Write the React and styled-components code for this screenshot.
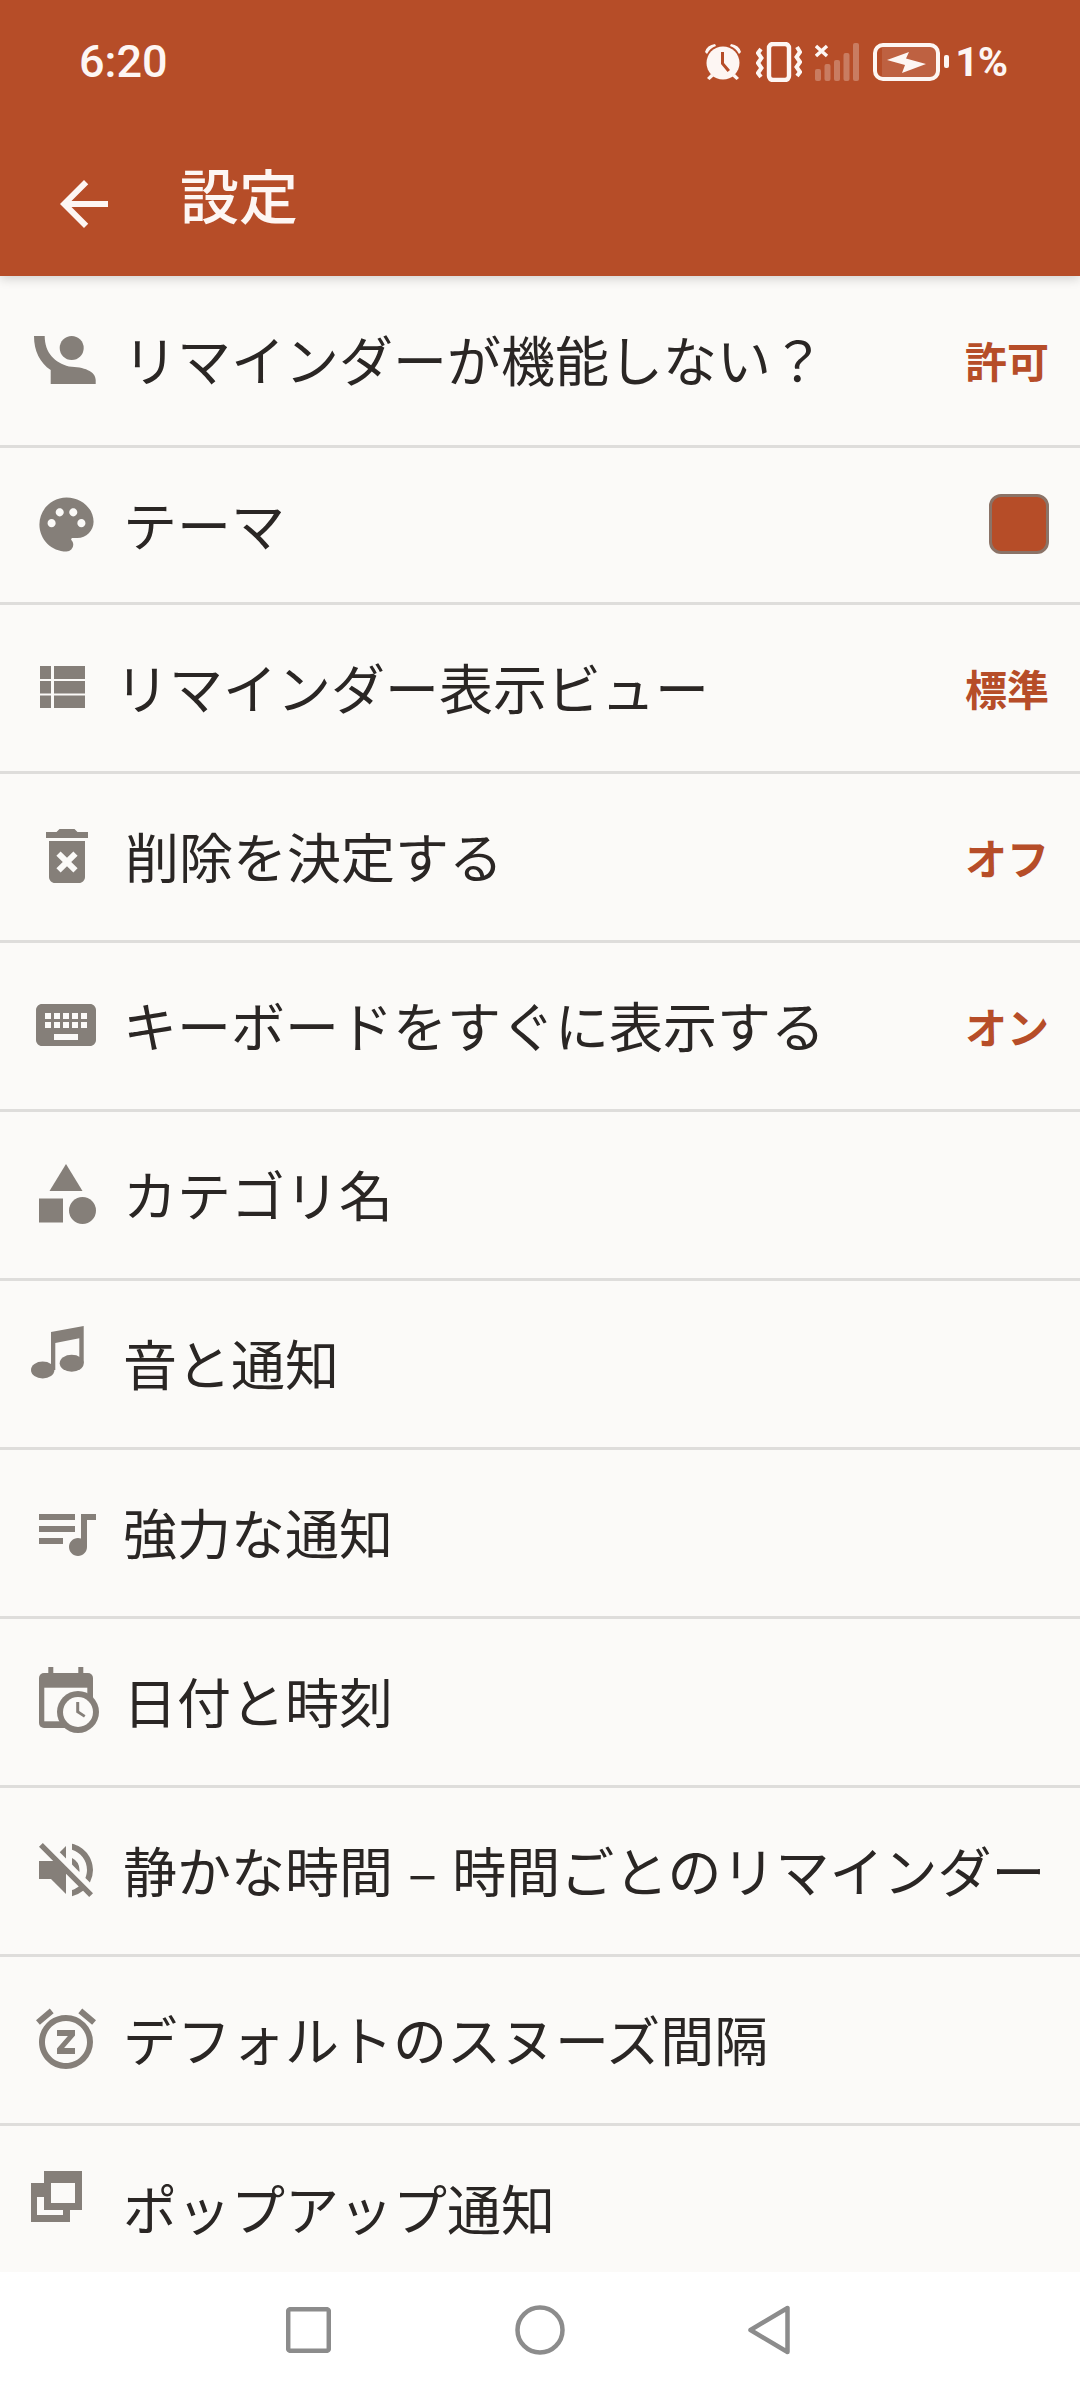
import React from "react";
import styled, { createGlobalStyle } from "styled-components";
import {
  MdArrowBack,
  MdCategory,
  MdDeleteForever,
  MdKeyboard,
  MdPalette,
  MdQueueMusic,
  MdSnooze,
  MdVolumeOff
} from "react-icons/md";

const brand = "#b64d28";
const paper = "#fbfaf8";
const iconGrey = "#857f79";
const cjk = '"Noto Sans CJK JP", "Noto Sans", sans-serif';

const GlobalStyle = createGlobalStyle`
  html, body {
    margin: 0;
    padding: 0;
    background: #fff;
  }
`;

const Screen = styled.div`
  width: 1080px;
  height: 2388px;
  display: flex;
  flex-direction: column;
  overflow: hidden;
  font-family: ${cjk};
`;

const Header = styled.header`
  flex: none;
  height: 276px;
  background: ${brand};
  color: #fdf6f3;
  box-shadow: 0 3px 10px rgba(0, 0, 0, 0.16);
  position: relative;
  z-index: 1;
`;

const StatusBar = styled.div`
  height: 108px;
  box-sizing: border-box;
  padding: 38px 73px 0 79px;
  display: flex;
  align-items: flex-start;
`;

const Clock = styled.span`
  font: 500 45px/48px Roboto, sans-serif;
  flex: 1;
`;

const StatusIcons = styled.div`
  display: flex;
  align-items: center;
  height: 48px;
`;

const StatusGlyph = styled.svg`
  display: block;
  flex: none;
  margin-left: ${p => p.$gap || 0}px;
  fill: currentColor;
`;

const Percent = styled.span`
  font: 700 41px/48px Roboto, sans-serif;
  letter-spacing: -1px;
  margin-left: 6px;
`;

const Toolbar = styled.div`
  height: 168px;
  display: flex;
  align-items: center;
`;

const BackIcon = styled(MdArrowBack)`
  flex: none;
  margin: 24px 0 0 48px;
`;

const Title = styled.h1`
  margin: 2px 0 0 60px;
  font-size: 59px;
  font-weight: 500;
  line-height: 1;
`;

const List = styled.main`
  flex: 1;
  min-height: 0;
  overflow: hidden;
  background: ${paper};
`;

const Row = styled.div`
  height: ${p => p.$height || 169}px;
  box-sizing: border-box;
  display: flex;
  align-items: center;
  padding: 0 31px 2px 0;
  border-bottom: 3px solid #dedddb;
`;

const IconSlot = styled.div`
  flex: none;
  width: 72px;
  height: 72px;
  display: flex;
  align-items: center;
  justify-content: center;
  color: ${iconGrey};
  margin-left: ${p => p.$left}px;
  margin-top: ${p => p.$top || 0}px;
  svg {
    display: block;
    flex: none;
    fill: currentColor;
  }
`;

const Label = styled.span`
  flex: 1;
  min-width: 0;
  white-space: nowrap;
  font-size: 54px;
  word-spacing: 3px;
  line-height: 1.2;
  color: #2a2624;
  margin-left: ${p => p.$indent}px;
`;

const Value = styled.span`
  flex: none;
  font-size: 42px;
  font-weight: 700;
  color: ${brand};
`;

const Swatch = styled.span`
  flex: none;
  width: 60px;
  height: 60px;
  box-sizing: border-box;
  border: 3px solid #8b7367;
  border-radius: 12px;
  background: ${brand};
`;

const NavBar = styled.nav`
  flex: none;
  height: 116px;
  background: #fff;
  display: flex;
  align-items: center;
  padding-left: 286px;
  svg {
    display: block;
    fill: none;
    stroke: #8c8c8c;
    stroke-width: 4.5;
  }
`;

const NavGap = styled.span`
  flex: none;
  width: ${p => p.$width}px;
`;

const AlarmGlyph = () => (
  <StatusGlyph $gap={0} width="38" height="38" viewBox="0 0 38 38">
    <path d="M1 9 Q3 2 11 1 L12 3 Q6 5 3 11Z M37 9 Q35 2 27 1 L26 3 Q32 5 35 11Z" />
    <path d="M7 31 L3 35 L5.5 37 L10 33Z M31 31 L35 35 L32.5 37 L28 33Z" />
    <circle cx="19" cy="20" r="16.5" />
    <path d="M17 9 h3 v11 l6 7 -2.4 2 -6.6 -8Z" fill={brand} />
  </StatusGlyph>
);

const VibrateGlyph = () => (
  <StatusGlyph $gap={14} width="46" height="40" viewBox="0 0 46 40">
    <rect x="13" y="2" width="20" height="36" rx="4" fill="none" stroke="currentColor" strokeWidth="4.4" />
    <path
      d="M5 7 L2 11 L5.5 16 L2 21 L5.5 26 L2 31 L5 35"
      fill="none"
      stroke="currentColor"
      strokeWidth="4"
    />
    <path
      d="M41 5 L44 10 L40.5 15 L44 20 L40.5 25 L44 30 L41 34"
      fill="none"
      stroke="currentColor"
      strokeWidth="4"
    />
  </StatusGlyph>
);

const SignalGlyph = () => (
  <StatusGlyph $gap={13} width="44" height="38" viewBox="0 0 44 38">
    <path
      d="M1 3 L12 13 M12 3 L1 13"
      fill="none"
      stroke="currentColor"
      strokeWidth="3.4"
    />
    <g opacity="0.28">
      <rect x="0" y="26" width="6" height="12" rx="2" />
      <rect x="9.5" y="21" width="6" height="17" rx="2" />
      <rect x="19" y="17" width="6" height="21" rx="2" />
      <rect x="28.5" y="10" width="6" height="28" rx="2" />
      <rect x="38" y="0" width="6" height="38" rx="2" />
    </g>
  </StatusGlyph>
);

const BatteryGlyph = () => (
  <StatusGlyph $gap={14} width="76" height="38" viewBox="0 0 76 38">
    <rect x="9" y="3" width="56" height="32" rx="3" opacity="0.12" />
    <rect x="2" y="2" width="63" height="34" rx="8" fill="none" stroke="currentColor" strokeWidth="4" />
    <path d="M14 17 L36 9 L33 15.5 L53 21 L29 30 L32 22Z" />
    <rect x="71" y="12" width="5" height="13" rx="2" />
  </StatusGlyph>
);

// pieces the icon package has no match for, traced from the screen
const RaisedHandIcon = () => (
  <svg width="62" height="48" viewBox="0 0 62 48">
    <circle cx="37.7" cy="12" r="12" />
    <path d="M0 0H10.7C10.7 17 21 27 35 30.4C50 31 61.7 35 61.7 44V48H16.7V34C6 27 0 15 0 0Z" />
  </svg>
);

const ViewListIcon = () => (
  <svg width="45" height="42" viewBox="0 0 45 42">
    <rect x="0" y="0" width="11" height="13" />
    <rect x="14" y="0" width="31" height="13" />
    <rect x="0" y="15" width="11" height="12.5" />
    <rect x="14" y="15" width="31" height="12.5" />
    <rect x="0" y="29.5" width="11" height="12.5" />
    <rect x="14" y="29.5" width="31" height="12.5" />
  </svg>
);

const NotesIcon = () => (
  <svg width="53" height="53" viewBox="0 0 53 53">
    <path d="M20 6L52.7 0V37H48.3V12.3L24.3 17V44H20Z" />
    <ellipse cx="11.7" cy="44" rx="11.7" ry="8.5" />
    <ellipse cx="40.7" cy="37.3" rx="12" ry="8.5" />
  </svg>
);

const CalendarClockIcon = () => (
  <svg width="60" height="66" viewBox="0 0 60 66">
    <rect x="9.3" y="0" width="5" height="8" />
    <rect x="39.3" y="0" width="5" height="8" />
    <rect x="0" y="6" width="54" height="55" rx="5" />
    <rect x="5.3" y="20.7" width="43" height="33.6" fill={paper} />
    <circle cx="39" cy="45" r="21" />
    <circle cx="39" cy="45" r="15" fill={paper} />
    <path d="M37.2 35H40.2V44L46.5 48.2 45 50.6 37.2 45.6Z" />
  </svg>
);

const PopupIcon = () => (
  <svg width="51" height="51" viewBox="0 0 51 51">
    <path fillRule="evenodd" d="M0 12H39V51H0ZM6 26V44H32V26Z" />
    <rect x="13" y="0" width="38" height="39" />
    <rect x="20" y="12" width="24" height="20" fill={paper} />
  </svg>
);

const items = [
  { label: "リマインダーが機能しない？", value: "許可", icon: <RaisedHandIcon />, left: 29, indent: 22, height: 172 },
  { label: "テーマ", swatch: true, icon: <MdPalette size={65} />, left: 30, indent: 21, height: 157 },
  { label: "リマインダー表示ビュー", value: "標準", icon: <ViewListIcon />, left: 26, indent: 17 },
  { label: "削除を決定する", value: "オフ", icon: <MdDeleteForever size={72} />, left: 31, indent: 22 },
  { label: "キーボードをすぐに表示する", value: "オン", icon: <MdKeyboard size={72} />, left: 30, indent: 21 },
  { label: "カテゴリ名", icon: <MdCategory size={72} />, left: 30, indent: 21 },
  { label: "音と通知", icon: <NotesIcon />, left: 21, top: -22, indent: 30 },
  { label: "強力な通知", icon: <MdQueueMusic size={72} />, left: 30, indent: 21 },
  { label: "日付と時刻", icon: <CalendarClockIcon />, left: 33, top: -3, indent: 18 },
  { label: "静かな時間 – 時間ごとのリマインダー", icon: <MdVolumeOff size={72} />, left: 30, indent: 21 },
  { label: "デフォルトのスヌーズ間隔", icon: <MdSnooze size={72} />, left: 30, indent: 21 },
  { label: "ポップアップ通知", icon: <PopupIcon />, left: 20, top: -24, indent: 31 }
];

export default function App() {
  return (
    <Screen>
      <GlobalStyle />
      <Header>
        <StatusBar>
          <Clock>6:20</Clock>
          <StatusIcons>
            <AlarmGlyph />
            <VibrateGlyph />
            <SignalGlyph />
            <BatteryGlyph />
            <Percent>1%</Percent>
          </StatusIcons>
        </StatusBar>
        <Toolbar>
          <BackIcon size={72} />
          <Title>設定</Title>
        </Toolbar>
      </Header>
      <List>
        {items.map(item => (
          <Row key={item.label} $height={item.height}>
            <IconSlot $left={item.left} $top={item.top}>
              {item.icon}
            </IconSlot>
            <Label $indent={item.indent}>{item.label}</Label>
            {item.value && <Value>{item.value}</Value>}
            {item.swatch && <Swatch />}
          </Row>
        ))}
      </List>
      <NavBar>
        <svg width="45" height="46" viewBox="0 0 45 46">
          <rect x="2.2" y="2.2" width="40.6" height="41.6" rx="2" />
        </svg>
        <NavGap $width={184} />
        <svg width="50" height="50" viewBox="0 0 50 50">
          <circle cx="25" cy="25" r="22.5" />
        </svg>
        <NavGap $width={183} />
        <svg width="42" height="50" viewBox="0 0 42 50">
          <path d="M39.5 3 V47 L2.5 25Z" strokeLinejoin="round" />
        </svg>
      </NavBar>
    </Screen>
  );
}
